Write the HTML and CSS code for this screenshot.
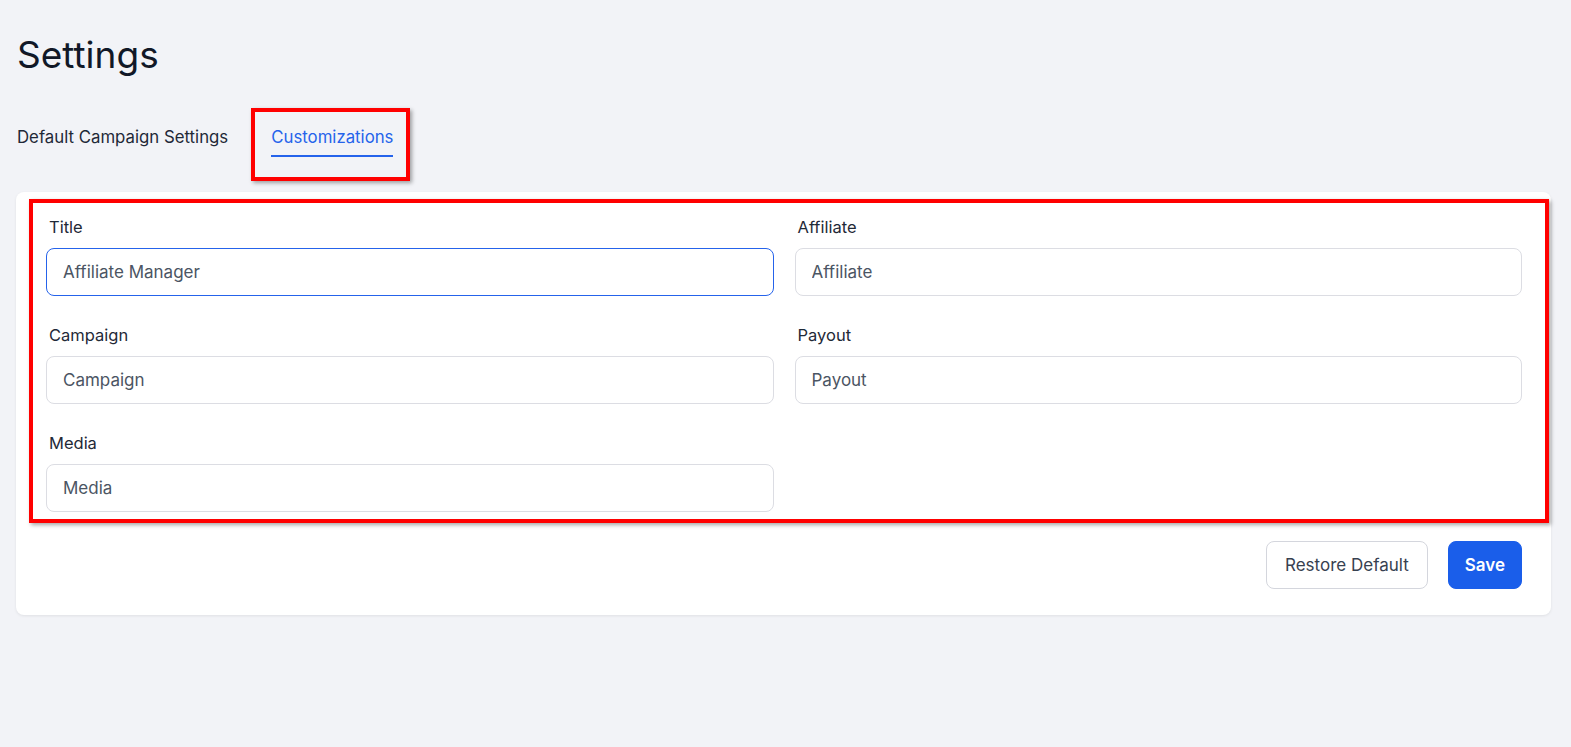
FILE: index.html
```html
<!DOCTYPE html>
<html lang="en">
<head>
    <meta charset="UTF-8">
    <meta name="viewport" content="width=device-width, initial-scale=1.0">
    <title>Settings</title>
    <link rel="stylesheet" href="styles.css">
</head>
<body>
    <h1 class="page-title">Settings</h1>

    <div class="tabs">
        <button class="tab">Default Campaign Settings</button>
        <div class="tab-wrap">
            <button class="tab active">Customizations</button>
            <div class="mark mark-tab"></div>
        </div>
    </div>

    <div class="card">
        <div class="mark mark-form"></div>
        <div class="form-grid">
            <div class="field">
                <label for="title">Title</label>
                <input type="text" id="title" class="focused" value="Affiliate Manager">
            </div>
            <div class="field">
                <label for="affiliate">Affiliate</label>
                <input type="text" id="affiliate" value="Affiliate">
            </div>
            <div class="field">
                <label for="campaign">Campaign</label>
                <input type="text" id="campaign" value="Campaign">
            </div>
            <div class="field">
                <label for="payout">Payout</label>
                <input type="text" id="payout" value="Payout">
            </div>
            <div class="field">
                <label for="media">Media</label>
                <input type="text" id="media" value="Media">
            </div>
        </div>
        <div class="actions">
            <button class="btn btn-outline">Restore Default</button>
            <button class="btn btn-primary">Save</button>
        </div>
    </div>
</body>
</html>
```

FILE: styles.css
```css
body {
    margin: 0;
    padding: 35px 20px 40px 16px;
    background-color: #f2f3f7;
    font-family: Inter, "Liberation Sans", sans-serif;
    color: #111827;
}
.page-title {
    margin: 0;
    font-size: 37px;
    line-height: 40px;
    font-weight: 400;
    color: #111827;
    padding-left: 1px;
}
.tabs {
    display: flex;
    align-items: flex-start;
    gap: 43px;
    margin-top: 50px;
    padding-left: 1px;
}
.tab {
    font-family: inherit;
    font-size: 16.8px;
    line-height: 24px;
    background: none;
    border: none;
    padding: 0 0 6px;
    color: #1f2937;
    cursor: pointer;
    border-bottom: 2px solid transparent;
}
.tab.active {
    color: #2563eb;
    border-bottom-color: #2563eb;
}
.tab-wrap {
    position: relative;
}
.mark {
    position: absolute;
    border: 4px solid #ff0000;
    box-shadow: 2px 2px 4px rgba(0, 0, 0, 0.35);
    pointer-events: none;
}
.mark-tab {
    left: -20px;
    top: -17px;
    width: 151px;
    height: 65px;
}
.card {
    position: relative;
    margin-top: 35px;
    background-color: #fff;
    border-radius: 8px;
    box-shadow: 0 1px 3px rgba(0, 0, 0, 0.08);
    padding: 23px 29px 26px 30px;
}
.mark-form {
    left: 13px;
    right: 2px;
    top: 7px;
    height: 316px;
}
.form-grid {
    display: grid;
    grid-template-columns: 1fr 1fr;
    column-gap: 21px;
    row-gap: 27px;
}
.field label {
    display: block;
    font-size: 16.5px;
    line-height: 24px;
    color: #1f2937;
    margin: 0 0 9px 3px;
}
.field input {
    box-sizing: border-box;
    width: 100%;
    height: 48px;
    padding: 0 16px;
    font-family: inherit;
    font-size: 17px;
    color: #4b5563;
    background: #fff;
    border: 1px solid #dcdde3;
    border-radius: 8px;
    outline: none;
}
.field input.focused {
    border-color: #2563eb;
}
.actions {
    display: flex;
    justify-content: flex-end;
    gap: 20px;
    margin-top: 29px;
}
.btn {
    height: 48px;
    font-family: inherit;
    font-size: 17px;
    border-radius: 8px;
    cursor: pointer;
}
.btn-outline {
    padding: 0 18px;
    background: #fff;
    border: 1px solid #d4d6dd;
    color: #374151;
}
.btn-primary {
    padding: 0 16px;
    background-color: #1a5eea;
    border: 1px solid #1a5eea;
    color: #fff;
    font-weight: 600;
}
```
